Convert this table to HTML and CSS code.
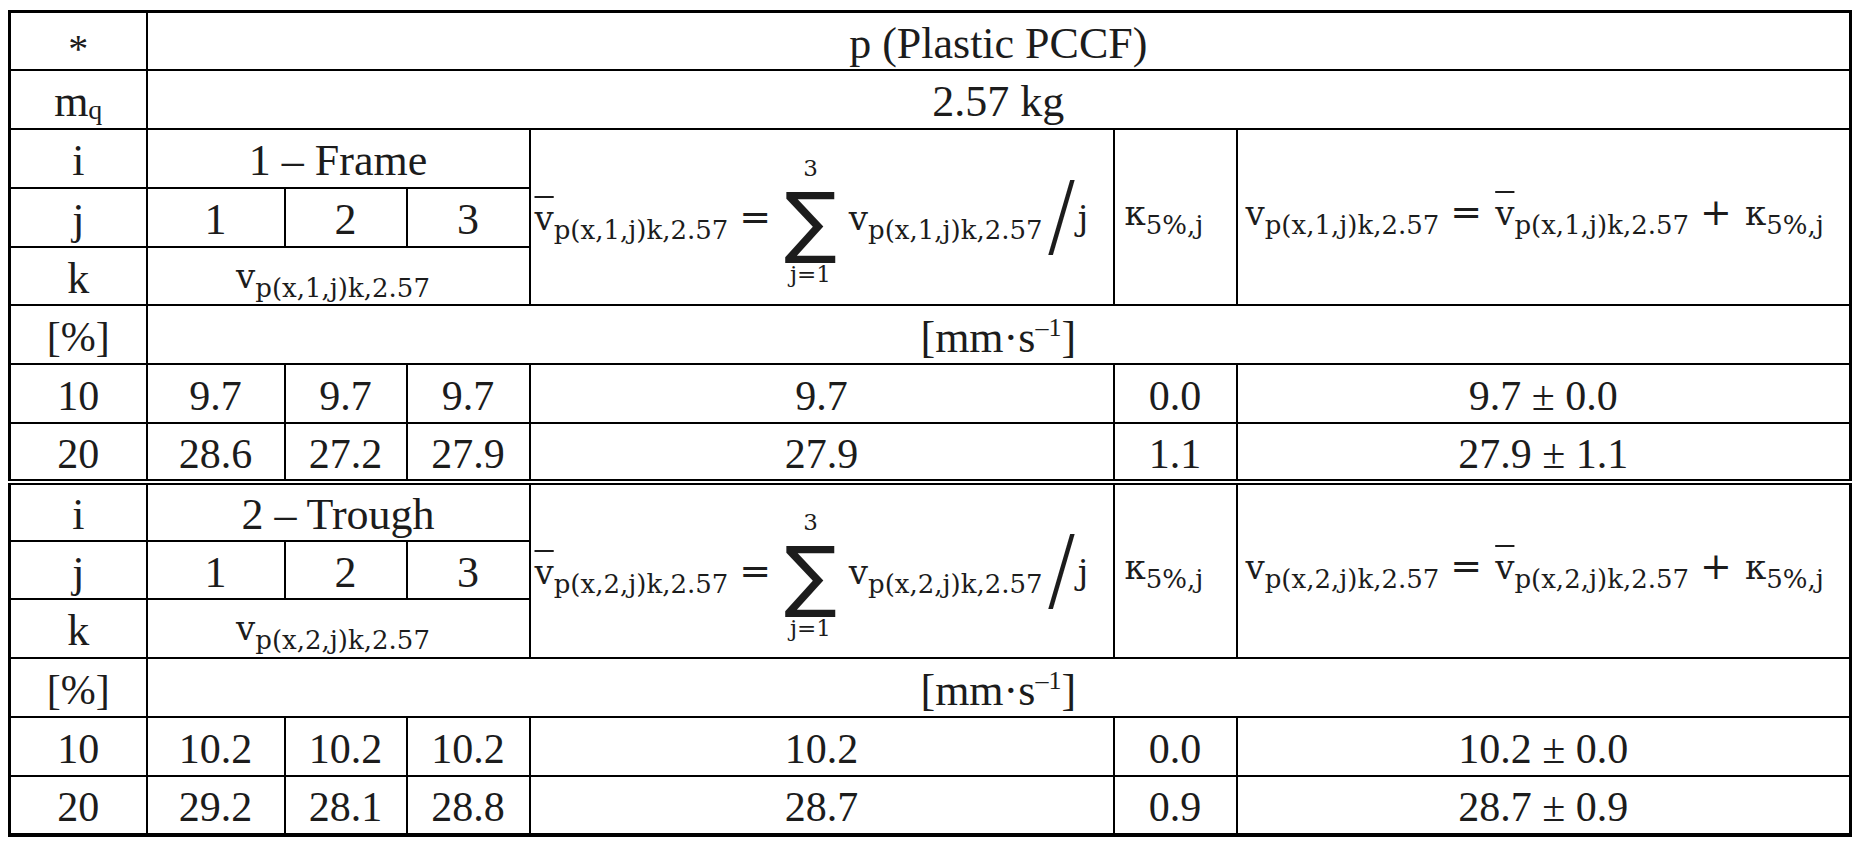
FILE: index.html
```html
<!DOCTYPE html>
<html>
<head>
  <link rel="stylesheet" href="styles.css">
</head>
<body>
  <table class="data">
    <colgroup>
      <col class="c-key">
      <col class="c-run1">
      <col class="c-run2">
      <col class="c-run3">
      <col class="c-mean">
      <col class="c-kappa">
      <col class="c-result">
    </colgroup>
    <tbody>
      <tr>
        <td class="lab star">*</td>
        <td colspan="6" class="lab">p (Plastic PCCF)</td>
      </tr>
      <tr>
        <td class="lab">m<span class="idx">q</span></td>
        <td colspan="6" class="lab">2.57 kg</td>
      </tr>

      <!-- i = 1, frame -->
      <tr>
        <td class="lab">i</td>
        <td colspan="3" class="lab">1 – Frame</td>
        <td rowspan="3" class="eq-cell mean">
          <span class="eq"><span class="bar">v</span><sub>p(x,1,j)k,2.57</sub><span class="op">=</span><span class="sum"><span class="lim">3</span><span class="sig">∑</span><span class="lim">j=1</span></span><span class="v2">v</span><sub>p(x,1,j)k,2.57</sub><span class="slash">/</span>j</span>
        </td>
        <td rowspan="3" class="kappa">
          <span class="eq">κ<sub>5%,j</sub></span>
        </td>
        <td rowspan="3" class="eq-cell result">
          <span class="eq">v<sub>p(x,1,j)k,2.57</sub><span class="op">=</span><span class="bar">v</span><sub>p(x,1,j)k,2.57</sub><span class="op">+</span>κ<sub>5%,j</sub></span>
        </td>
      </tr>
      <tr>
        <td class="lab">j</td>
        <td class="lab">1</td>
        <td class="lab">2</td>
        <td class="lab">3</td>
      </tr>
      <tr>
        <td class="lab">k</td>
        <td colspan="3" class="vk"><span class="eq">v<sub>p(x,1,j)k,2.57</sub></span></td>
      </tr>
      <tr>
        <td>[%]</td>
        <td colspan="6" class="lab">[mm·s<sup>–1</sup>]</td>
      </tr>
      <tr>
        <td>10</td>
        <td>9.7</td>
        <td>9.7</td>
        <td>9.7</td>
        <td>9.7</td>
        <td>0.0</td>
        <td>9.7 ± 0.0</td>
      </tr>
      <tr class="split">
        <td>20</td>
        <td>28.6</td>
        <td>27.2</td>
        <td>27.9</td>
        <td>27.9</td>
        <td>1.1</td>
        <td>27.9 ± 1.1</td>
      </tr>

      <!-- i = 2, trough -->
      <tr>
        <td class="lab">i</td>
        <td colspan="3" class="lab">2 – Trough</td>
        <td rowspan="3" class="eq-cell mean">
          <span class="eq"><span class="bar">v</span><sub>p(x,2,j)k,2.57</sub><span class="op">=</span><span class="sum"><span class="lim">3</span><span class="sig">∑</span><span class="lim">j=1</span></span><span class="v2">v</span><sub>p(x,2,j)k,2.57</sub><span class="slash">/</span>j</span>
        </td>
        <td rowspan="3" class="kappa">
          <span class="eq">κ<sub>5%,j</sub></span>
        </td>
        <td rowspan="3" class="eq-cell result">
          <span class="eq">v<sub>p(x,2,j)k,2.57</sub><span class="op">=</span><span class="bar">v</span><sub>p(x,2,j)k,2.57</sub><span class="op">+</span>κ<sub>5%,j</sub></span>
        </td>
      </tr>
      <tr>
        <td class="lab">j</td>
        <td class="lab">1</td>
        <td class="lab">2</td>
        <td class="lab">3</td>
      </tr>
      <tr>
        <td class="lab">k</td>
        <td colspan="3" class="vk"><span class="eq">v<sub>p(x,2,j)k,2.57</sub></span></td>
      </tr>
      <tr>
        <td>[%]</td>
        <td colspan="6" class="lab">[mm·s<sup>–1</sup>]</td>
      </tr>
      <tr>
        <td>10</td>
        <td>10.2</td>
        <td>10.2</td>
        <td>10.2</td>
        <td>10.2</td>
        <td>0.0</td>
        <td>10.2 ± 0.0</td>
      </tr>
      <tr>
        <td>20</td>
        <td>29.2</td>
        <td>28.1</td>
        <td>28.8</td>
        <td>28.7</td>
        <td>0.9</td>
        <td>28.7 ± 0.9</td>
      </tr>
    </tbody>
  </table>
</body>
</html>
```

FILE: styles.css
```css
body {
  margin: 0;
  background: #FFFFFF;
}

.data {
  border-collapse: collapse;
  table-layout: fixed;
  width: 1844px;
  margin: 10px 0 0 8px;
  border: 3px solid #000000;
  border-bottom-width: 4px;
  color: #1C1C1C;
  font-family: "Liberation Serif", "Times New Roman", serif;
  font-size: 42px;
}

.c-key { width: 137px; }
.c-run1 { width: 138px; }
.c-run2 { width: 122px; }
.c-run3 { width: 123px; }
.c-mean { width: 584px; }
.c-kappa { width: 123px; }
.c-result { width: 614px; }

.data tr {
  height: 58.8px;
}

.data td {
  border: 2px solid #000000;
  padding: 5px 0 0;
  text-align: center;
  vertical-align: middle;
  line-height: 1;
  white-space: nowrap;
}

.data .split td {
  border-bottom: 6px double #000000;
}

.data .lab {
  font-size: 44px;
}

.data .star {
  font-size: 40px;
  padding-top: 15px;
}

.idx {
  font-size: 28px;
  vertical-align: -3px;
}

.data sup {
  font-size: 26px;
  vertical-align: 16px;
}

/* formula cells */

.eq {
  font-family: "DejaVu Serif", serif;
  font-size: 34px;
}

.eq sub {
  font-size: 26px;
  vertical-align: -9px;
  line-height: 1;
}

.data .eq-cell {
  text-align: left;
  padding: 0 0 0 4px;
}

.data .mean {
  padding-top: 8px;
}

.data .result {
  padding: 0 0 6px 8px;
}

.data .kappa {
  padding: 0 22px 6px 0;
}

.data .vk {
  padding-top: 1px;
}

.vk .eq {
  margin-left: -10px;
}

.bar {
  text-decoration: overline;
  text-decoration-thickness: 2px;
}

.op {
  font-size: 38px;
  margin: 0 13px 0 11px;
}

.sum {
  display: inline-block;
  vertical-align: middle;
  text-align: center;
  margin: 0 10px 0 0;
}

.lim {
  display: block;
  font-size: 23px;
  line-height: 22px;
}

.sig {
  display: block;
  font-family: "DejaVu Sans", sans-serif;
  font-size: 78px;
  line-height: 84px;
}

.v2 {
  margin-left: 2px;
}

.slash {
  display: inline-block;
  font-family: "Liberation Serif", serif;
  font-size: 112px;
  line-height: 0;
  vertical-align: -24px;
  margin: 0 1px 0 3px;
  transform: scaleX(0.85);
}
```
